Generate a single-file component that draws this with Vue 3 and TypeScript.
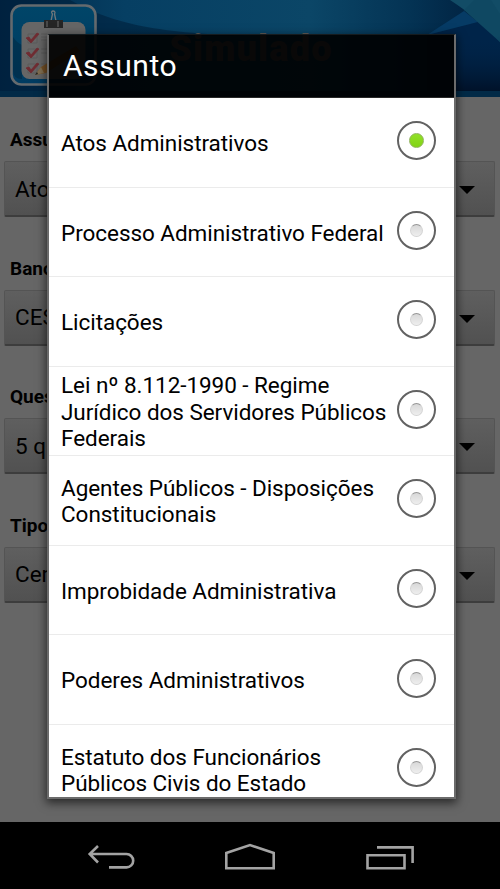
<script setup lang="ts">
import { ref } from 'vue'

interface Field {
  label: string
  value: string
}

const fields: Field[] = [
  { label: 'Assunto', value: 'Atos Administrativos' },
  { label: 'Banca', value: 'CESPE' },
  { label: 'Questões', value: '5 questões' },
  { label: 'Tipo', value: 'Certo ou Errado' },
]

const subjects: string[][] = [
  ['Atos Administrativos'],
  ['Processo Administrativo Federal'],
  ['Licitações'],
  ['Lei nº 8.112-1990 - Regime', 'Jurídico dos Servidores Públicos', 'Federais'],
  ['Agentes Públicos - Disposições', 'Constitucionais'],
  ['Improbidade Administrativa'],
  ['Poderes Administrativos'],
  ['Estatuto dos Funcionários', 'Públicos Civis do Estado'],
]

const selected = ref(0)
</script>

<template>
  <div class="screen">
    <header class="header">
      <svg class="rays" viewBox="0 0 500 97" preserveAspectRatio="none">
        <defs>
          <linearGradient id="sky" x1="0" x2="1" y1="0" y2="0">
            <stop offset="0" stop-color="#002747" />
            <stop offset=".25" stop-color="#063f63" />
            <stop offset=".62" stop-color="#0b4667" />
            <stop offset=".82" stop-color="#043354" />
            <stop offset="1" stop-color="#001c3a" />
          </linearGradient>
          <linearGradient id="deep" x1="0" x2="0" y1="0" y2="1">
            <stop offset="0" stop-color="#00264a" stop-opacity="0" />
            <stop offset="1" stop-color="#001128" />
          </linearGradient>
        </defs>
        <rect width="500" height="92" fill="url(#sky)" />
        <path d="M70 0C110 22 150 33 250 36H48V92H0V0Z" fill="#001d38" opacity=".55" />
        <path d="M427 35L478 22L500 41V92H427Z" fill="#002449" />
        <path d="M427 35L464 11L478 22Z" fill="#063b65" />
        <path d="M450 0H500V42C484 24 467 11 450 0Z" fill="#124c66" />
        <path d="M474 0H491L500 14V42L464 10Z" fill="#0f4862" />
        <path d="M455 35H500V92H455Z" fill="url(#deep)" />
        <rect y="91" width="500" height="6" fill="#022a47" />
      </svg>
      <svg class="logo" viewBox="0 0 88 84">
        <defs>
          <linearGradient id="tile" x1="0" x2="0" y1="0" y2="1">
            <stop offset="0" stop-color="#004568" />
            <stop offset="1" stop-color="#003b61" />
          </linearGradient>
        </defs>
        <rect x="1.5" y="1.5" width="84" height="79" rx="10" fill="url(#tile)" stroke="#646a6e" stroke-width="2.6" />
        <path d="M3 33Q7 39 12 41V75Q3 75 3 66Z" fill="#00253e" opacity=".5" />
        <rect x="11.5" y="18" width="64" height="57" rx="8" fill="#666" />
        <path d="M41 17l1.500-7c-3.500-4 4.500-4 2 0l1.500 7" fill="none" stroke="#71777a" stroke-width="1.3" />
        <rect x="34" y="16" width="19" height="8" fill="#252525" />
        <path d="M37 17v6M48 17v6" stroke="#484848" stroke-width="2" />
        <g fill="none" stroke="#5b5b5b">
          <path d="M18 30h9v9H18zM18 45h9v9H18zM18 60h9v9H18z" />
          <path d="M31 30h6M31 33h6M31 36h6M31 45h6M31 49h6M31 60h6" />
        </g>
        <path d="M16 34l3-1 2 3 6-7 2 1-8 9zM16 49l3-1 2 3 6-7 2 1-8 9zM16 64l3-1 2 3 6-7 2 1-8 9z" fill="#702c32" stroke="#702c32" stroke-width=".8" />
        <path d="M25 71l6-8 35-21 4 5-34 22z" fill="#765126" />
        <path d="M25 71l6-8 3 6z" fill="#806f52" />
        <path d="M25 71l2-3 1 2z" fill="#222" />
      </svg>
      <h1 class="app-title">Simulado</h1>
    </header>

    <main class="form">
      <div v-for="field in fields" :key="field.label" class="field">
        <div class="label">{{ field.label }}</div>
        <div class="spinner">
          <span>{{ field.value }}</span>
          <i class="caret"></i>
        </div>
      </div>
    </main>

    <nav class="navbar">
      <svg viewBox="0 0 500 67">
        <g fill="none" stroke="#a3a3a3" stroke-width="2.6">
          <path d="M90 32h36.500a6.700 6.700 0 0 1 0 13.400H109M98 24L89.700 32L98 40.500" />
          <path d="M226.300 46.300V31L250 23L273.700 31V46.300Z" />
          <path d="M367.500 33.300h37v13h-37zM377 25.400h35.600V41" />
        </g>
      </svg>
    </nav>

    <section class="dialog">
      <div class="dialog-title">Assunto</div>
      <div class="options">
        <div v-for="(lines, index) in subjects" :key="index" class="option" @click="selected = index">
          <div class="text">
            <div v-for="line in lines" :key="line">{{ line }}</div>
          </div>
          <div class="radio"><i :class="{ on: selected === index }"></i></div>
        </div>
      </div>
    </section>
  </div>
</template>

<style>
body {
  margin: 0;
  background: #000;
}
</style>

<style scoped>
.screen {
  position: relative;
  display: flex;
  flex-direction: column;
  width: 500px;
  height: 889px;
  overflow: hidden;
  background: #666;
  color: #000;
  font-family: Roboto, "Liberation Sans", sans-serif;
}
.header {
  position: relative;
  flex: none;
  height: 97px;
}
.rays {
  display: block;
  width: 500px;
  height: 97px;
}
.logo {
  position: absolute;
  left: 10px;
  top: 4px;
  width: 88px;
  height: 84px;
}
.app-title {
  position: absolute;
  left: 1px;
  top: 28px;
  width: 100%;
  margin: 0;
  text-align: center;
  font-size: 36px;
  line-height: 42px;
  font-weight: 900;
  letter-spacing: 1.3px;
  color: #665f58;
}
.form {
  flex: 1;
  padding: 28px 5px 0 4px;
}
.field {
  height: 128.5px;
}
.label {
  height: 36px;
  padding-left: 6px;
  white-space: nowrap;
  font-size: 19px;
  line-height: 29px;
  font-weight: 700;
}
.spinner {
  display: flex;
  align-items: center;
  justify-content: space-between;
  box-sizing: border-box;
  height: 56px;
  padding: 0 19px 0 10px;
  border: 1px solid #545454;
  border-bottom: 2px solid #3d3d3d;
  border-radius: 2px;
  background: linear-gradient(#5f5f5f, #515151);
  font-size: 22.5px;
}
.caret {
  border: 8px solid transparent;
  border-top-color: #000;
  border-bottom: 0;
  margin-top: 3px;
}
.navbar {
  flex: none;
  height: 67px;
  background: #000;
}
.navbar svg {
  display: block;
  width: 500px;
  height: 67px;
}
.dialog {
  position: absolute;
  left: 47px;
  top: 34px;
  display: flex;
  flex-direction: column;
  box-sizing: border-box;
  width: 409px;
  height: 765px;
  border: solid #6b6b6b;
  border-width: 1px 2px 2px 2px;
  border-top-color: #151b1e;
  box-shadow: 0 3px 9px 1px rgba(0, 0, 0, 0.6);
}
.dialog-title {
  flex: none;
  box-sizing: border-box;
  height: 63px;
  padding-left: 14px;
  border-bottom: 1px solid #292929;
  background: rgba(0, 0, 0, 0.91);
  color: #fff;
  font-size: 30px;
  line-height: 61px;
  letter-spacing: 0.55px;
}
.options {
  flex: 1;
  min-height: 0;
  overflow: hidden;
  background: #fff;
}
.option {
  display: flex;
  align-items: center;
  justify-content: space-between;
  box-sizing: border-box;
  height: 89.55px;
  padding: 0 18px 0 12px;
  border-bottom: 1px solid #ebebeb;
}
.text {
  padding-top: 2px;
  white-space: nowrap;
  font-size: 22.5px;
  line-height: 26.5px;
  letter-spacing: -0.05px;
}
.radio {
  display: flex;
  align-items: center;
  justify-content: center;
  flex: none;
  box-sizing: border-box;
  width: 39px;
  height: 39px;
  margin-top: -3px;
  border: 2px solid #626262;
  border-radius: 50%;
}
.radio i {
  box-sizing: border-box;
  width: 13px;
  height: 13px;
  border: 1px solid #d4d4d4;
  border-top-color: #969696;
  border-radius: 50%;
  background: linear-gradient(#d8d8d8, #eee);
}
.radio i.on {
  width: 15px;
  height: 15px;
  border-color: #8fb35a;
  background: linear-gradient(#91e028, #82d414);
}
</style>
